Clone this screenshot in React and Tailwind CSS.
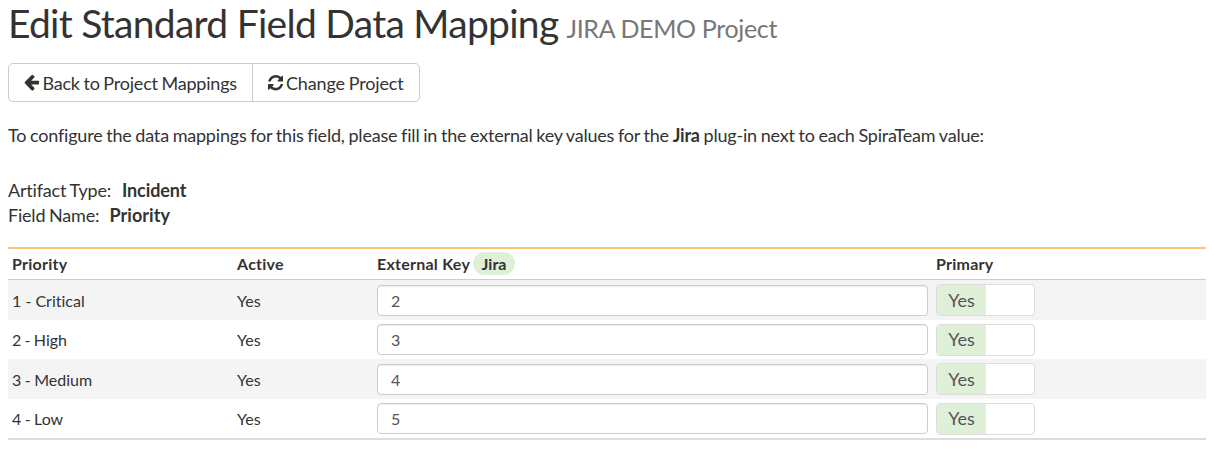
const rows = [
  { name: "1 - Critical", key: "2", height: "h-[40px]", bg: "bg-[#f4f4f4]", spacing: "" },
  { name: "2 - High", key: "3", height: "h-[39px]", bg: "bg-white", spacing: "[word-spacing:-0.8px]" },
  { name: "3 - Medium", key: "4", height: "h-[40px]", bg: "bg-[#f4f4f4]", spacing: "[word-spacing:-0.6px]" },
  { name: "4 - Low", key: "5", height: "h-[39px]", bg: "bg-white", spacing: "[word-spacing:-0.7px]" },
];

const columns = "grid grid-cols-[229px_140px_559px_270px]";

function ArrowLeftIcon() {
  return (
    <svg className="mr-[3px] size-[15.4px] shrink-0" viewBox="0 -64 1536 1536" fill="currentColor" aria-hidden="true">
      <path d="M1536 640v128q0 53-32.5 90.5t-84.5 37.5h-704l293 294q38 36 38 90t-38 90l-75 76q-37 37-90 37-52 0-91-37l-651-652q-37-37-37-90 0-52 37-91l651-650q38-38 91-38 52 0 90 38l75 74q38 38 38 91t-38 91l-293 293h704q52 0 84.5 37.5t32.5 90.5z" />
    </svg>
  );
}

function RefreshIcon() {
  return (
    <svg className="mr-[3px] size-[15.4px] shrink-0" viewBox="0 0 1536 1536" fill="currentColor" aria-hidden="true">
      <path d="M1511 928q0 5-1 7-64 268-268 434.5t-478 166.5q-146 0-282.5-55t-243.5-157l-129 129q-19 19-45 19t-45-19-19-45v-448q0-26 19-45t45-19h448q26 0 45 19t19 45-19 45l-137 137q71 66 161 102t187 36q134 0 250-65t186-179q11-17 53-117 8-23 30-23h192q13 0 22.5 9.5t9.5 22.5zm25-800v448q0 26-19 45t-45 19h-448q-26 0-45-19t-19-45 19-45l138-138q-148-137-349-137-134 0-250 65t-186 179q-11 17-53 117-8 23-30 23h-199q-13 0-22.5-9.5t-9.5-22.5v-7q65-268 270-434.5t480-166.5q146 0 284 55.5t245 156.5l130-129q19-19 45-19t45 19 19 45z" />
    </svg>
  );
}

export default function App() {
  return (
    <main className="h-[449px] overflow-hidden bg-white pr-2 pl-2 font-['Lato',sans-serif] text-[18px] leading-[25px] text-[#333] [font-variant-ligatures:none]">
      <h1 className="flex h-[63px] items-baseline gap-[8px] text-[39px] leading-[46px] whitespace-nowrap">
        <span className="tracking-[-0.72px]">Edit Standard Field Data Mapping</span>
        <small className="text-[25px] tracking-[-0.34px] text-[#777]">JIRA DEMO Project</small>
      </h1>

      <div className="flex h-[39px] w-[412px] rounded-[5px] border border-[#ccc] whitespace-nowrap">
        <button className="flex w-[244px] items-center border-r border-[#ccc] pt-px pl-[15px] tracking-[-0.2px] [word-spacing:-0.75px]">
          <ArrowLeftIcon />
          Back to Project Mappings
        </button>
        <button className="flex w-[166px] items-center pt-px pl-[14.5px] tracking-[-0.13px] [word-spacing:-0.7px]">
          <RefreshIcon />
          Change Project
        </button>
      </div>

      <p className="mt-[21px] tracking-[-0.2px] [word-spacing:-0.65px] whitespace-nowrap">
        To configure the data mappings for this field, please fill in the external key values for the <b>Jira</b> plug-in next to each SpiraTeam value:
      </p>

      <div className="mt-[30px] h-[69px] whitespace-nowrap">
        <div className="tracking-[-0.18px] [word-spacing:-0.6px]">Artifact Type: <b className="ml-[7px] tracking-[-0.1px]">Incident</b></div>
        <div className="tracking-[-0.2px] [word-spacing:-0.7px]">Field Name: <b className="ml-[6.5px] tracking-[0.05px]">Priority</b></div>
      </div>

      <section className="w-[1198px] border-t-2 border-b-2 border-t-[#fdc473] border-b-[#ddd] text-[16px]">
        <div className={`${columns} h-[31px] items-center border-b border-[#fdc473] pb-[2px] font-bold tracking-[0.25px]`}>
          <span className="pl-1">Priority</span>
          <span>Active</span>
          <span className="flex items-center gap-[3px]">
            External Key
            <span className="flex h-[23px] items-center rounded-full bg-[#dff0d8] px-[8.5px] tracking-normal">Jira</span>
          </span>
          <span>Primary</span>
        </div>
        {rows.map((row) => (
          <div key={row.name} className={`${columns} ${row.height} ${row.bg} items-center`}>
            <span className={`pl-1 ${row.spacing}`}>{row.name}</span>
            <span>Yes</span>
            <input
              defaultValue={row.key}
              className="h-[31px] w-[551px] rounded-[4px] border border-[#ccc] bg-white px-[13px] text-[#555] shadow-[inset_0_1px_1px_rgba(0,0,0,0.075)]"
            />
            <div className="flex h-[32px] w-[99px] overflow-hidden rounded-[4px] border border-[#ddd] bg-white text-[18px] text-[#555]">
              <span className="flex w-[49px] items-center justify-center bg-[#dff0d8]">Yes</span>
            </div>
          </div>
        ))}
      </section>
    </main>
  );
}
